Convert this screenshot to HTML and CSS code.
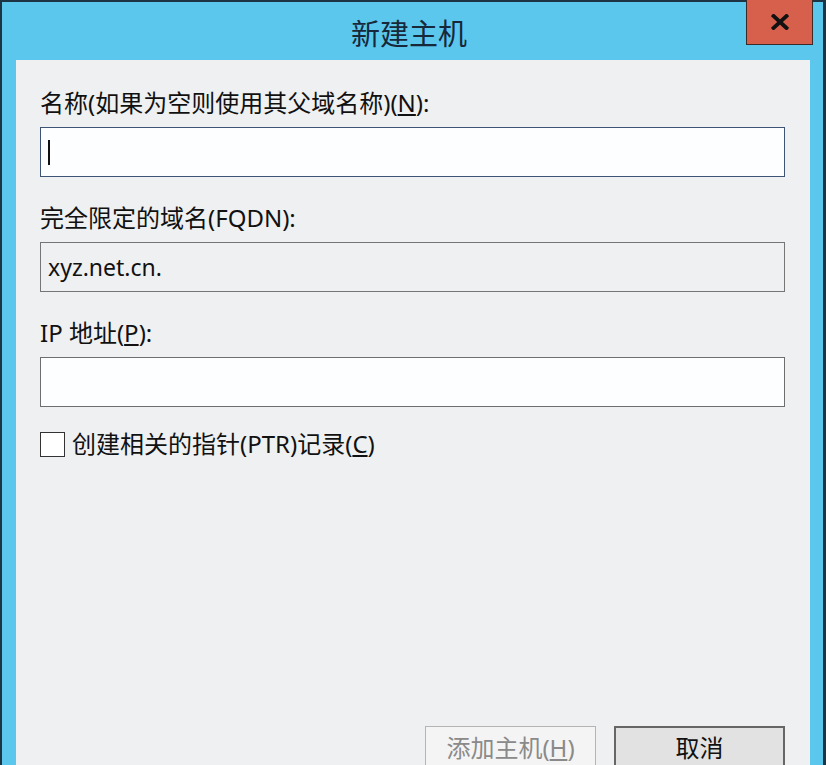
FILE: index.html
```html
<!DOCTYPE html>
<html lang="zh-CN">
<head>
<meta charset="utf-8">
<title>新建主机</title>
<link rel="stylesheet" href="styles.css">
</head>
<body>
<div class="window">
  <div class="titlebar">
    <span class="title">新建主机</span>
    <button class="close" aria-label="关闭">
      <svg width="18" height="16" viewBox="0 0 18 16"><path d="M2.5 2 L15.5 14 M15.5 2 L2.5 14" stroke="#111" stroke-width="3.8" stroke-linecap="square"/></svg>
    </button>
  </div>
  <div class="panel">
    <div class="label">名称(如果为空则使用其父域名称)(<u>N</u>):</div>
    <div class="field focused"><span class="caret"></span></div>
    <div class="label gap-lg">完全限定的域名(FQDN):</div>
    <div class="field readonly">xyz.net.cn.</div>
    <div class="label gap-lg">IP 地址(<u>P</u>):</div>
    <div class="field"></div>
    <div class="check-row">
      <span class="checkbox"></span>
      <span class="check-label">创建相关的指针(PTR)记录(<u>C</u>)</span>
    </div>
    <div class="buttons">
      <button class="btn disabled">添加主机(<u>H</u>)</button>
      <button class="btn default">取消</button>
    </div>
  </div>
</div>
</body>
</html>
```

FILE: styles.css
```css
* { box-sizing: border-box; }
html, body { margin: 0; padding: 0; }
body {
  width: 826px;
  height: 765px;
  overflow: hidden;
  font-family: "Noto Sans", "Noto Sans CJK SC", sans-serif;
  background: #5cc7ec;
}
.window {
  position: relative;
  width: 826px;
  height: 765px;
  background: #5cc7ec;
  border-top: 2px solid #1d3444;
  border-left: 2px solid #1d3444;
  border-right: 3px solid #1d3444;
  padding: 0 13px 0 14px;
  display: flex;
  flex-direction: column;
}
.titlebar {
  height: 58px;
  flex: none;
  display: flex;
  align-items: center;
  justify-content: center;
}
.title {
  font-family: "Noto Sans CJK SC", sans-serif;
  font-size: 29px;
  color: #17283a;
  margin-right: 8px;
  margin-top: 2px;
}
.close {
  position: absolute;
  top: -2px;
  right: 10px;
  width: 67px;
  height: 45px;
  background: #d6604b;
  border: 1px solid #3a2a28;
  border-top: none;
  padding: 0;
  display: flex;
  align-items: center;
  justify-content: center;
}
.panel {
  flex: 1;
  background: #eff0f1;
  padding: 30px 25px 0 24px;
  display: flex;
  flex-direction: column;
  color: #111;
}
.label {
  font-size: 24px;
  line-height: 26px;
  height: 26px;
  margin-bottom: 11px;
  white-space: nowrap;
}
.gap-lg { margin-top: 28px; }
.field {
  width: 745px;
  height: 50px;
  background: #fdfeff;
  border: 1px solid #6e6e6e;
  padding: 0 7px;
  font-size: 23px;
  line-height: 46px;
  display: flex;
  align-items: center;
}
.field.focused { border-color: #3d5476; }
.field.readonly { background: #eff0f1; border-color: #757575; }
.caret {
  display: block;
  width: 2px;
  height: 25px;
  background: #111;
}
.check-row {
  margin-top: 24px;
  height: 26px;
  display: flex;
  align-items: center;
  gap: 7px;
}
.checkbox {
  width: 25px;
  height: 25px;
  background: #fff;
  border: 1px solid #333;
  flex: none;
}
.check-label {
  font-size: 24px;
  line-height: 26px;
  white-space: nowrap;
}
.buttons {
  margin-top: 269px;
  display: flex;
  justify-content: flex-end;
  gap: 18px;
}
.btn {
  width: 171px;
  height: 44px;
  font-family: "Noto Sans", "Noto Sans CJK SC", sans-serif;
  font-size: 24px;
  line-height: 40px;
  padding: 0;
}
.btn.disabled {
  background: #f4f4f4;
  border: 1px solid #b4b4b4;
  color: #8a8a8a;
}
.btn.default {
  background: #e2e2e2;
  border: 2px solid #666;
  color: #111;
}
```
